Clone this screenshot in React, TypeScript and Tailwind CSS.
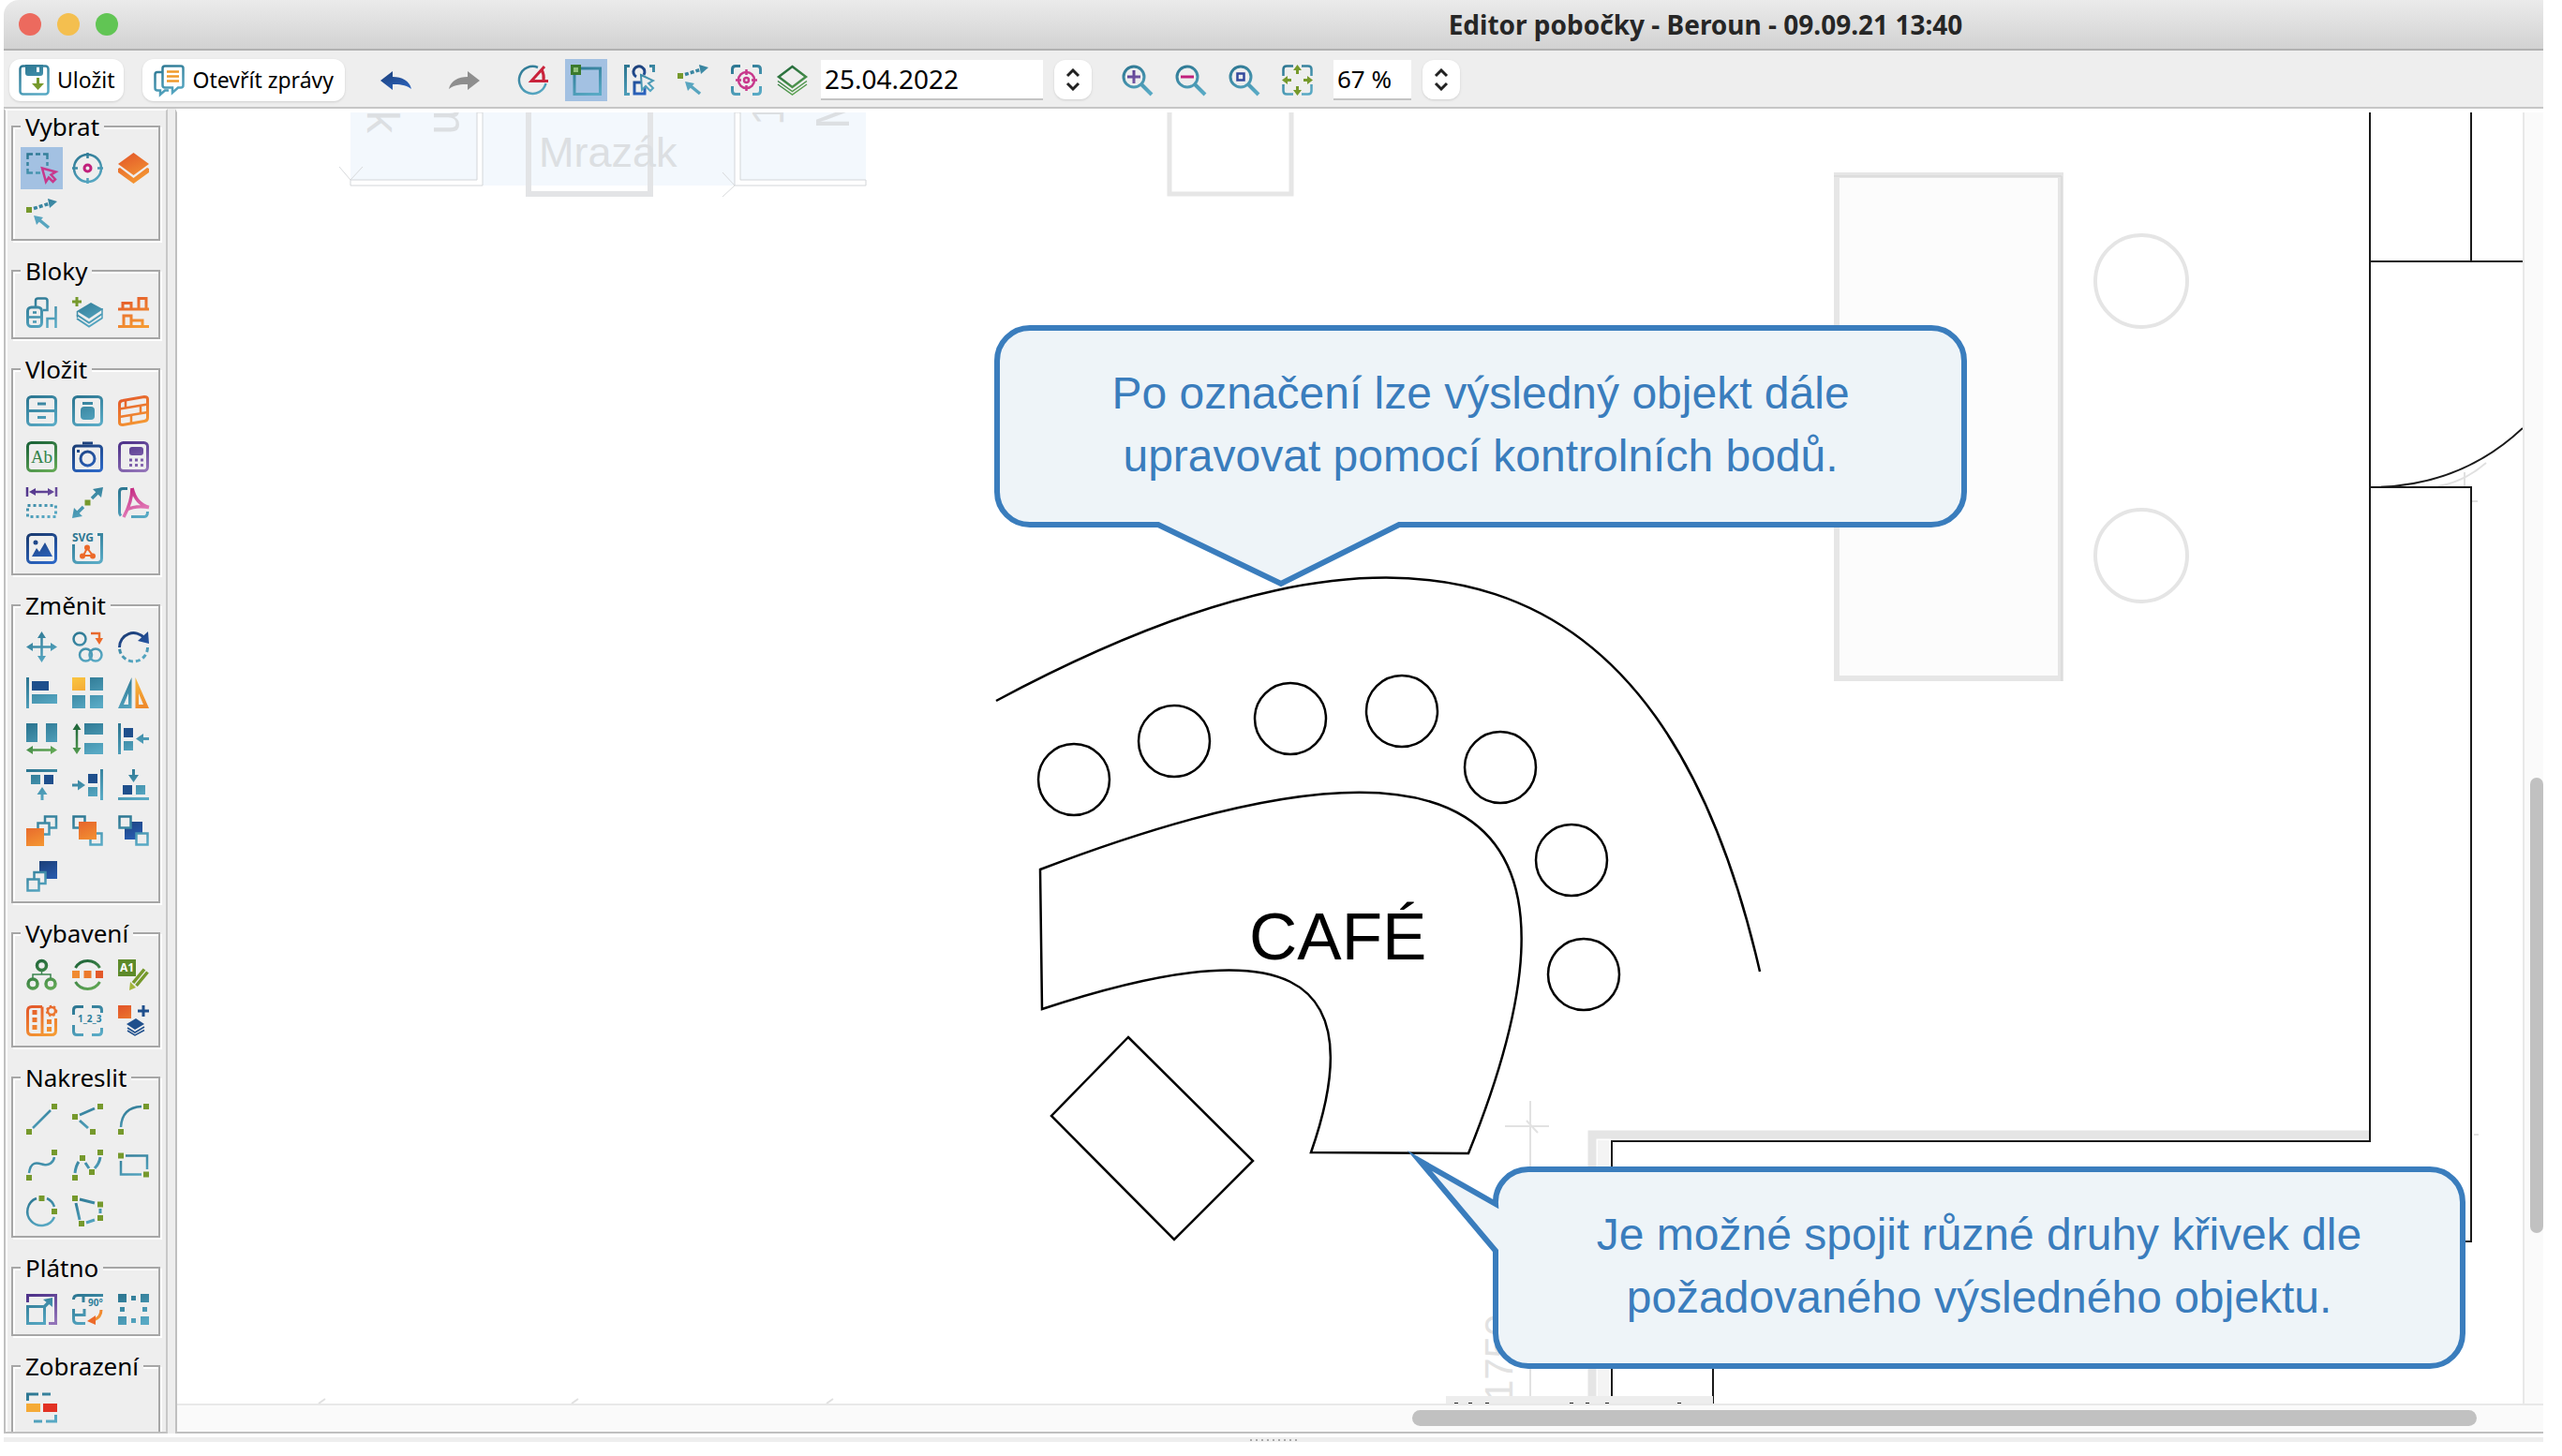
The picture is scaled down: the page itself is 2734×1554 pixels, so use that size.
import { useState } from 'react'
import type { ReactNode } from 'react'

// ─── Icon colours (gradients live in <IconDefs />) ────────────────────────────
const TEAL = 'url(#teal)'
const ORANGE = 'url(#orange)'
const AMBER = 'url(#amber)'
const GREEN = 'url(#green)'
const NAVY = 'url(#navy)'
const PURPLE = 'url(#purple)'
const PINK = 'url(#pink)'
const LIME = '#76992c'

const GRADIENTS = [
  ['teal', '#2d7792', '#58a9c4'],
  ['orange', '#e3592a', '#f59a33'],
  ['amber', '#f9c23f', '#ee8a2c'],
  ['green', '#1d6439', '#61a754'],
  ['navy', '#1b3c72', '#2c66c4'],
  ['purple', '#4f338a', '#9273b8'],
  ['pink', '#c1207c', '#e78cc2'],
]

function IconDefs() {
  return (
    <svg className="absolute size-0" aria-hidden="true">
      <defs>
        {GRADIENTS.map(([id, from, to]) => (
          <linearGradient key={id} id={id} gradientUnits="userSpaceOnUse" x1="8" y1="0" x2="22" y2="33">
            <stop offset="0" stopColor={from} />
            <stop offset="1" stopColor={to} />
          </linearGradient>
        ))}
      </defs>
    </svg>
  )
}

// Green control point
function Dot({ x, y }: { x: number; y: number }) {
  return <rect x={x - 3} y={y - 3} width="6" height="6" fill={LIME} stroke="none" />
}

function Box({ x, y, w, h, c = TEAL, r = 0 }: { x: number; y: number; w: number; h: number; c?: string; r?: number }) {
  return <rect x={x} y={y} width={w} height={h} rx={r} fill={c} stroke="none" />
}

function Shape({ d, c = TEAL }: { d: string; c?: string }) {
  return <path d={d} fill={c} stroke="none" fillRule="evenodd" />
}

function Frame({ c = TEAL }: { c?: string }) {
  return <rect x="1.5" y="1.5" width="30" height="30" rx="4" stroke={c} strokeWidth="3" />
}

function Square({ x, y }: { x: number; y: number }) {
  return <rect x={x} y={y} width="12" height="12" fill="#eeeeee" />
}

// All icons are drawn on a 33 × 33 grid
const ICONS: Record<string, ReactNode> = {
  save: (
    <>
      <rect x="1.5" y="1.5" width="30" height="30" rx="3" fill="white" />
      <Shape d="M7 0H26V9Q26 12 23 12H10Q7 12 7 9ZM19 2V8H22V2Z" />
      <Shape d="M19 14H22V20H27L20.500 27L14 20H19Z" c={LIME} />
    </>
  ),
  reports: (
    <>
      <path d="M12 1.500H29Q31.500 1.500 31.500 4V22Q31.500 24.500 29 24.500H26L20 30V24.500H12Q9.500 24.500 9.500 22V4Q9.500 1.500 12 1.500Z" />
      <path d="M9 8H4Q1.500 8 1.500 10.500V25Q1.500 27.500 4 27.500H7V32L12 27.500H16" />
      <path d="M14 7.500H27M14 12.500H27M14 17.500H27" stroke="#f09a2c" />
    </>
  ),
  undo: <Shape c={NAVY} d="M0 17L13 7V13C23 13 31 17 33 26C26 21 20 21 13 21V27Z" />,
  redo: <Shape c="#8e8e8e" d="M33 17L20 7V13C10 13 2 17 0 26C7 21 13 21 20 21V27Z" />,
  angle: (
    <>
      <path d="M22 3A14.500 14.500 0 1 0 30.500 20" />
      <path d="M29 2L15 17.500H33M26 5Q29 11 28 17" stroke="#c9233b" strokeWidth="3" />
    </>
  ),
  area: (
    <>
      <rect x="4" y="4" width="27.500" height="27.500" strokeWidth="3" />
      <rect x="1.500" y="1.500" width="8" height="8" stroke="#3c7a2c" strokeWidth="3" fill="#8fc07a" />
    </>
  ),
  pick: (
    <>
      <path d="M6 1.500H1.500V31.500H6M27 1.500H31.500V8" strokeWidth="3" />
      <rect x="11" y="19" width="11" height="12" stroke={NAVY} strokeWidth="3" />
      <path d="M13 13A6 6 0 1 1 21 11" stroke={NAVY} strokeWidth="3" />
      <path d="M18 11L31 17L26 20L31 25L28 28L23 23L19 27Z" fill="#eeeeee" strokeWidth="2" />
    </>
  ),
  vector: (
    <>
      <Dot x={3} y={12} />
      <path d="M8 10.500L24 5.500" strokeWidth="3.500" strokeDasharray="4 2" />
      <Shape d="M33 3L23 0L25 10Z" />
      <path d="M24 31L13 22" strokeWidth="3.500" stroke="#58a5bf" />
      <Shape d="M8 18L18 20L11 28Z" c="#58a5bf" />
    </>
  ),
  focus: (
    <>
      <path d="M1.500 10V5Q1.500 1.500 5 1.500H10M23 1.500H28Q31.500 1.500 31.500 5V10M31.500 23V28Q31.500 31.500 28 31.500H23M10 31.500H5Q1.500 31.500 1.500 28V23" strokeWidth="3" />
      <g stroke="#c8388c">
        <circle cx="16.500" cy="16.500" r="8.500" />
        <circle cx="16.500" cy="16.500" r="2.500" />
        <path d="M16.500 5V11M16.500 22V28M5 16.500H11M22 16.500H28" />
      </g>
    </>
  ),
  floors: (
    <g stroke={GREEN}>
      <path d="M16.500 2L31 13L16.500 24L2 13Z" />
      <path d="M1 17.500L16.500 28.500L32 17.500M1 21L16.500 32L32 21" strokeWidth="1.500" />
    </g>
  ),
  zoomIn: (
    <>
      <circle cx="13" cy="13" r="11" strokeWidth="3" />
      <path d="M21 21L32 32" strokeWidth="4" />
      <path d="M13 6V20M6 13H20" stroke={PURPLE} strokeWidth="3" />
    </>
  ),
  zoomOut: (
    <>
      <circle cx="13" cy="13" r="11" strokeWidth="3" />
      <path d="M21 21L32 32" strokeWidth="4" />
      <path d="M6 13H20" stroke="#c1207c" strokeWidth="3" />
    </>
  ),
  zoomOne: (
    <>
      <circle cx="13" cy="13" r="11" strokeWidth="3" />
      <path d="M21 21L32 32" strokeWidth="4" />
      <rect x="9.500" y="9.500" width="7" height="7" stroke="#33499c" />
    </>
  ),
  fit: (
    <>
      <path d="M12 1.500H5Q1.500 1.500 1.500 5V12M21 1.500H28Q31.500 1.500 31.500 5V12M1.500 21V28Q1.500 31.500 5 31.500H12M21 31.500H28Q31.500 31.500 31.500 28V21" />
      <Shape c={LIME} d="M16.500 0L21 6H18V10H15V6H12ZM16.500 33L21 27H18V23H15V27H12ZM0 16.500L6 12V15H10V18H6V21ZM33 16.500L27 12V15H23V18H27V21Z" />
    </>
  ),
  select: (
    <>
      <path d="M1.500 7V1.500H7M10 1.500H15M18 1.500H22.500V7M22.500 10V14M1.500 10V14M1.500 17V21.500H7M10 21.500H15" />
      <path d="M17 16.500L31.500 20.500L26.500 23.500L31 28.500L28.500 31L24 26.500L21 31Z" stroke="#c8388c" />
    </>
  ),
  target: (
    <>
      <circle cx="16.500" cy="16.500" r="14.500" />
      <path d="M16.500 0V6M16.500 27V33M0 16.500H6M27 16.500H33" />
      <circle cx="16.500" cy="16.500" r="3.500" stroke="#c1207c" strokeWidth="3" />
    </>
  ),
  layers: (
    <>
      <Shape c={ORANGE} d="M16.500 0L33 12L16.500 24L0 12Z" />
      <Shape c={ORANGE} d="M0 17L2 16L16.500 27L31 16L33 17V21L16.500 33L0 21Z" />
    </>
  ),
  furniture: (
    <>
      <path d="M10 10V4Q10 1.500 12.500 1.500H20Q22.500 1.500 22.500 4V14H18" />
      <rect x="1.500" y="11" width="15" height="20.500" rx="4" strokeWidth="3" />
      <path d="M1.500 21.500H16.500M7 16.500H11M7 26.500H11" />
      <path d="M31.500 10V33M22.500 33V23H31" />
    </>
  ),
  addBlock: (
    <>
      <path d="M5 0V10M0 5H10" stroke={LIME} strokeWidth="3" />
      <Shape d="M20 6L33 13L18 23L5 15Z" />
      <path d="M5 19L18 27.500L32 18M5 23L18 31.500L32 22.500" strokeWidth="2" />
      <path d="M32 12V23M5.500 15V22" strokeWidth="1.500" />
    </>
  ),
  shelves: (
    <g stroke={ORANGE} strokeWidth="3">
      <path d="M0 13H33M0 31.500H33" />
      <path d="M5 13V6.500H14V13M22 13V1.500H30V13M6 31.500V20H14V31.500M14 25H26V31.500" />
    </g>
  ),
  cabinet: (
    <>
      <Frame />
      <path d="M1.500 16.500H31.500M12 9H21M12 23.500H21" strokeWidth="3" />
    </>
  ),
  appliance: (
    <>
      <Frame />
      <path d="M11 8.500H22" strokeWidth="3" />
      <Box x={9} y={12} w={15} h={14} r={4} />
    </>
  ),
  wall: (
    <g stroke={ORANGE}>
      <path d="M1.500 9Q1.500 6 5 5.500L28 1.500Q31.500 1.500 31.500 4V24Q31.500 27 28 27.500L5 31.500Q1.500 31.500 1.500 29Z" strokeWidth="3" />
      <path d="M1.500 14.500L31.500 9.500M1.500 23L31.500 18M8 5V13M24 11V19M14 21V29" />
    </g>
  ),
  label: (
    <>
      <Frame c={GREEN} />
      <text x="16.500" y="23" textAnchor="middle" fontSize="19" fontFamily="Liberation Serif, serif" fill="#34834a" stroke="none">Ab</text>
    </>
  ),
  camera: (
    <g stroke={NAVY} strokeWidth="3">
      <rect x="1.500" y="5" width="30" height="26.500" rx="3" />
      <path d="M11 2H22" />
      <circle cx="16.500" cy="18.500" r="7.500" />
      <Box x={5} y={9} w={3} h={3} c={NAVY} />
    </g>
  ),
  register: (
    <>
      <Frame c={PURPLE} />
      <Box x={12} y={6} w={15} h={9} r={3} c={PURPLE} />
      <path d="M12 20H27M12 25.500H27" stroke={PURPLE} strokeWidth="3" strokeDasharray="3" />
    </>
  ),
  dimension: (
    <>
      <path d="M1 0V10M32 0V10M6 5H27" stroke={PURPLE} />
      <Shape c={PURPLE} d="M3 5L10 1V9ZM30 5L23 1V9Z" />
      <rect x="1.500" y="19.500" width="30" height="12" strokeWidth="3" strokeDasharray="3" />
    </>
  ),
  connector: (
    <>
      <path d="M21 12L28 5M12 21L5 28" strokeWidth="3.500" />
      <Shape d="M33 0L31 11L22 2ZM0 33L2 22L11 31Z" />
      <Dot x={16.500} y={16.500} />
    </>
  ),
  pdf: (
    <>
      <path d="M10 1.500H5Q1.500 1.500 1.500 5V27Q1.500 29 3 30.500M14 31.500H28Q31.500 31.500 31.500 26" strokeWidth="3" />
      <path d="M15 1Q15 15 6 32M15 1Q19 18 33 21.500M9 24Q19 19 33 21.500" stroke={PINK} strokeWidth="3.500" />
    </>
  ),
  image: (
    <>
      <Frame c={NAVY} />
      <circle cx="10" cy="10" r="2.500" fill={NAVY} stroke="none" />
      <Shape c={NAVY} d="M6 25L11 16L14 20L20 10L28 25Z" />
    </>
  ),
  svg: (
    <>
      <text x="0" y="9" fontSize="12" fontWeight="bold" fontFamily="Noto Sans, sans-serif" fill="#2d7792" stroke="none">SVG</text>
      <path d="M27 1.500H31.500V27Q31.500 31.500 27 31.500H6Q1.500 31.500 1.500 27V12" strokeWidth="3" />
      <path d="M16 16L12 24H22Z" stroke="#ec6a2a" strokeWidth="2" />
      <g fill="#ec6a2a" stroke="none">
        <circle cx="16" cy="15.500" r="3" />
        <circle cx="11" cy="24.500" r="3" />
        <circle cx="22" cy="24.500" r="3" />
      </g>
    </>
  ),
  move: (
    <>
      <path d="M16.500 5V28M5 16.500H28" />
      <Shape d="M16.500 0L21 7H12ZM16.500 33L21 26H12ZM0 16.500L7 12V21ZM33 16.500L26 12V21Z" />
    </>
  ),
  duplicate: (
    <>
      <circle cx="8" cy="8" r="6.500" />
      <circle cx="14.500" cy="25" r="6.500" />
      <circle cx="25" cy="25" r="6.500" />
      <path d="M20 2H29V8" stroke={ORANGE} />
      <Shape c="#ec6a2a" d="M24.500 7H33L29 14Z" />
    </>
  ),
  rotate: (
    <>
      <path d="M1.500 17A15 15 0 0 1 28 7" stroke={NAVY} strokeWidth="3" />
      <Shape c={NAVY} d="M32 0L33 13L21 10Z" />
      <path d="M31.500 17A15 15 0 0 1 1.500 17" strokeWidth="3" strokeDasharray="5 3" />
    </>
  ),
  alignLeft: (
    <>
      <path d="M1.500 0V33" strokeWidth="3" />
      <Box x={6} y={4} w={18} h={10} c="#1f4f8c" />
      <Box x={6} y={18} w={27} h={10} />
    </>
  ),
  tiles: (
    <>
      <Box x={0} y={0} w={14} h={14} c={AMBER} />
      <Box x={19} y={0} w={14} h={14} />
      <Box x={0} y={19} w={14} h={14} />
      <Box x={19} y={19} w={14} h={14} />
    </>
  ),
  mirror: (
    <>
      <Shape d="M0 33L14.500 0V33ZM6 29H11V17Z" />
      <Shape c={AMBER} d="M33 33L18.500 0V33ZM27 29H22V17Z" />
    </>
  ),
  spreadX: (
    <>
      <Box x={0} y={0} w={12} h={20} />
      <Box x={21} y={0} w={12} h={20} />
      <path d="M5 28.500H28" stroke={GREEN} />
      <Shape c={GREEN} d="M0 28.500L7 24V33ZM33 28.500L26 24V33Z" />
    </>
  ),
  spreadY: (
    <>
      <path d="M5 5V28" stroke={GREEN} />
      <Shape c={GREEN} d="M5 0L9.500 7H0.500ZM5 33L9.500 26H0.500Z" />
      <Box x={13} y={0} w={20} h={12} />
      <Box x={13} y={21} w={20} h={12} />
    </>
  ),
  pushLeft: (
    <>
      <path d="M1.500 0V33M33 16.500H25" strokeWidth="3" />
      <Box x={6} y={5} w={10} h={10} c="#1f4f8c" />
      <Box x={6} y={19} w={10} h={10} />
      <Shape d="M19 16.500L27 11V22Z" />
    </>
  ),
  pushTop: (
    <>
      <path d="M0 1.500H33M17 33V25" strokeWidth="3" />
      <Box x={5} y={6} w={10} h={10} />
      <Box x={19} y={6} w={10} h={10} c="#1f4f8c" />
      <Shape d="M17 19L22.500 27H11.500Z" />
    </>
  ),
  pushRight: (
    <>
      <path d="M31.500 0V33M0 17H8" strokeWidth="3" />
      <Box x={17} y={5} w={10} h={10} c="#1f4f8c" />
      <Box x={17} y={19} w={10} h={10} />
      <Shape d="M14 17L6 11.500V22.500Z" />
    </>
  ),
  pushBottom: (
    <>
      <path d="M0 31.500H33M16.500 0V8" strokeWidth="3" />
      <Box x={5} y={17} w={10} h={10} c="#1f4f8c" />
      <Box x={19} y={17} w={10} h={10} />
      <Shape d="M16.500 14L11 6H22Z" />
    </>
  ),
  toFront: (
    <>
      <Square x={20} y={1.500} />
      <Square x={12.500} y={8.500} />
      <Box x={0} y={14} w={19} h={19} c={ORANGE} />
    </>
  ),
  forward: (
    <>
      <Square x={1.500} y={1.500} />
      <Square x={19.500} y={19.500} />
      <Box x={7} y={7} w={19} h={19} c={ORANGE} />
    </>
  ),
  backward: (
    <>
      <Box x={7} y={7} w={19} h={19} c={NAVY} />
      <Square x={1.500} y={1.500} />
      <Square x={19.500} y={19.500} />
    </>
  ),
  toBack: (
    <>
      <Box x={14} y={0} w={19} h={19} c={NAVY} />
      <Square x={8.500} y={12} />
      <Square x={1.500} y={19.500} />
    </>
  ),
  tree: (
    <>
      <g stroke={GREEN} strokeWidth="3.500">
        <circle cx="16.500" cy="6.500" r="5" />
        <circle cx="7" cy="26" r="5" />
        <circle cx="26" cy="26" r="5" />
      </g>
      <path d="M16.500 11V16M7 20V16H26V20" stroke="#3c8550" strokeWidth="1.500" />
    </>
  ),
  orbit: (
    <>
      <path d="M3.500 9A15 15 0 0 1 29.500 9M3.500 24A15 15 0 0 0 29.500 24" stroke={GREEN} strokeWidth="3" />
      <Box x={0} y={12} w={8} h={8} c="#f08a30" />
      <Box x={12.500} y={12} w={8} h={8} c="#ec7a2c" />
      <Box x={25} y={12} w={8} h={8} c="#e3592a" />
    </>
  ),
  rename: (
    <>
      <Box x={0} y={0} w={19} h={18} c="#5d8a2a" />
      <text x="9.500" y="13" textAnchor="middle" fontSize="12" fontWeight="bold" fontFamily="Noto Sans, sans-serif" fill="white" stroke="none">A1</text>
      <path d="M16 25L28 10.500M19.500 28L31.500 13.500" stroke={LIME} strokeWidth="3.500" />
      <Shape c="#a3b53a" d="M13 24L19 30L12 33Z" />
    </>
  ),
  rack: (
    <g stroke={ORANGE}>
      <path d="M17 1.500H6Q1.500 1.500 1.500 6V27Q1.500 31.500 6 31.500H27Q31.500 31.500 31.500 27V14M17 1.500V31.500" strokeWidth="3" />
      <path d="M9 5V29M24.500 15V29" strokeWidth="5" strokeDasharray="5 3" />
      <circle cx="27" cy="6" r="4" />
      <circle cx="27" cy="6" r="5.500" strokeWidth="1.500" strokeDasharray="2.300" />
    </g>
  ),
  numbering: (
    <>
      <path d="M1.500 10V5Q1.500 1.500 5 1.500H12M21 1.500H28Q31.500 1.500 31.500 5V8M31.500 24V28Q31.500 31.500 28 31.500H21M12 31.500H5Q1.500 31.500 1.500 28V21" strokeWidth="3" />
      <text x="6" y="18" fontSize="10" fontWeight="bold" fontFamily="Noto Sans, sans-serif" fill="#2f7f9b" stroke="none">1_2_3</text>
    </>
  ),
  addEquipment: (
    <>
      <Box x={0} y={0} w={14} h={14} c={ORANGE} />
      <path d="M27 0V12M21 6H33" stroke="#1f4f8c" strokeWidth="3" />
      <Shape c="#1f4f8c" d="M19 14L28 20L18 26L9 20Z" />
      <path d="M10 24L18 29L28 23M10 27L18 32L28 26.500" stroke="#1f4f8c" strokeWidth="1.500" />
    </>
  ),
  line: (
    <>
      <path d="M7 26L26 7" />
      <Dot x={30} y={3} />
      <Dot x={3} y={30} />
    </>
  ),
  polyline: (
    <>
      <path d="M8 12L24 5M8 18L17 26" strokeWidth="3" />
      <Dot x={30} y={3} />
      <Dot x={3} y={14} />
      <Dot x={22} y={30} />
    </>
  ),
  arc: (
    <>
      <path d="M3 25Q4 4 25 3" />
      <Dot x={30} y={3} />
      <Dot x={3} y={30} />
    </>
  ),
  curve: (
    <>
      <path d="M3 25C5 10 14 15 19 16S29 14 30 8" />
      <Dot x={30} y={3} />
      <Dot x={3} y={30} />
    </>
  ),
  spline: (
    <>
      <path d="M3 25Q4 17 7 13M14 14L18 20M24 20Q29 15 30 8" strokeWidth="3" />
      <Dot x={30} y={3} />
      <Dot x={11} y={9} />
      <Dot x={21} y={24} />
      <Dot x={3} y={30} />
    </>
  ),
  rectangle: (
    <>
      <path d="M8 6.500H31V21M25 26.500H3V12" />
      <Dot x={3} y={6.500} />
      <Dot x={30} y={26.500} />
    </>
  ),
  circle: (
    <>
      <path d="M11 3A15 15 0 1 0 30 23M22 3A15 15 0 0 1 30 12" />
      <Dot x={16.500} y={3} />
      <Dot x={30} y={17} />
    </>
  ),
  polygon: (
    <>
      <path d="M8 4L24 8M30 14V19M24 26L15 29M4 8L8 26" strokeWidth="3" />
      <Dot x={3} y={3} />
      <Dot x={30} y={9.500} />
      <Dot x={30} y={24} />
      <Dot x={10} y={30} />
    </>
  ),
  resize: (
    <>
      <path d="M1.500 9V1.500H31.500V31.500H24" stroke={PURPLE} strokeWidth="3" />
      <rect x="1.500" y="13.500" width="18" height="18" strokeWidth="3" />
      <path d="M18 15L24 9" strokeWidth="3.500" />
      <Shape d="M28 4V14L18 6Z" />
    </>
  ),
  rotateCanvas: (
    <>
      <path d="M33 1.500H6Q1.500 1.500 1.500 6M12 1.500V9M1.500 16V27Q1.500 31.500 6 31.500H14M1.500 22.500H13V16" strokeWidth="3" />
      <text x="17" y="13" fontSize="10" fontWeight="bold" fontFamily="Noto Sans, sans-serif" fill="#2f7f9b" stroke="none">90°</text>
      <path d="M31 17Q31 25 23 28" stroke={ORANGE} strokeWidth="3" />
      <Shape c="#ec6a2a" d="M16 29L25 23V33Z" />
    </>
  ),
  handles: (
    <>
      <Box x={0} y={0} w={9} h={9} />
      <Box x={24} y={0} w={9} h={9} />
      <Box x={0} y={24} w={9} h={9} />
      <Box x={24} y={24} w={9} h={9} />
      <Box x={14} y={2} w={5} h={5} />
      <Box x={14} y={26} w={5} h={5} />
      <Box x={2} y={14} w={5} h={5} />
      <Box x={26} y={14} w={5} h={5} />
    </>
  ),
  display: (
    <>
      <path d="M1.500 9V2H13M17 2H26M31.500 24V31H21M17 31H8" strokeWidth="3" />
      <Box x={0} y={12} w={15} h={9} c="#f5aa36" />
      <Box x={18} y={12} w={15} h={9} c="#e23224" />
    </>
  ),
}

const GROUPS = [
  { title: 'Vybrat', tools: ['select', 'target', 'layers', 'vector'] },
  { title: 'Bloky', tools: ['furniture', 'addBlock', 'shelves'] },
  {
    title: 'Vložit',
    tools: ['cabinet', 'appliance', 'wall', 'label', 'camera', 'register', 'dimension', 'connector', 'pdf', 'image', 'svg'],
  },
  {
    title: 'Změnit',
    tools: [
      'move', 'duplicate', 'rotate', 'alignLeft', 'tiles', 'mirror', 'spreadX', 'spreadY', 'pushLeft',
      'pushTop', 'pushRight', 'pushBottom', 'toFront', 'forward', 'backward', 'toBack',
    ],
  },
  { title: 'Vybavení', tools: ['tree', 'orbit', 'rename', 'rack', 'numbering', 'addEquipment'] },
  { title: 'Nakreslit', tools: ['line', 'polyline', 'arc', 'curve', 'spline', 'rectangle', 'circle', 'polygon'] },
  { title: 'Plátno', tools: ['resize', 'rotateCanvas', 'handles'] },
  { title: 'Zobrazení', tools: ['display'] },
]

function Icon({ name }: { name: string }) {
  return (
    <svg className="size-[33px] shrink-0 overflow-visible" viewBox="0 0 33 33" fill="none" stroke={TEAL} strokeWidth="2.500" aria-hidden="true">
      {ICONS[name]}
    </svg>
  )
}

function ToolButton({ name, active, onClick }: { name: string; active?: boolean; onClick?: () => void }) {
  return (
    <button
      aria-label={name}
      onClick={onClick}
      className={`flex size-[45px] shrink-0 items-center justify-center ${active ? 'bg-[#a3c1e2]' : ''}`}
    >
      <Icon name={name} />
    </button>
  )
}

function Spinner({ label }: { label: string }) {
  return (
    <button aria-label={label} className="flex h-[42px] w-10 shrink-0 items-center justify-center rounded-xl bg-white shadow">
      <svg className="h-6 w-4" viewBox="0 0 16 24" fill="none" stroke="#222222" strokeWidth="3" aria-hidden="true">
        <path d="M2 8L8 2L14 8M2 16L8 22L14 16" />
      </svg>
    </button>
  )
}

// ─── Title bar + toolbar ──────────────────────────────────────────────────────
function TitleBar() {
  return (
    <header className="relative flex h-[54px] shrink-0 items-center rounded-tl-2xl border-b-2 border-[#b1b1b1] bg-gradient-to-b from-[#ebebeb] to-[#d2d2d2] pl-4">
      <div className="flex gap-[17px]">
        <span className="size-6 rounded-full bg-[#ec6a5e]" />
        <span className="size-6 rounded-full bg-[#f4bf4f]" />
        <span className="size-6 rounded-full bg-[#61c554]" />
      </div>
      <h1 className="flex-1 pl-[800px] text-center text-[28px] leading-8 font-bold text-[#262626]">
        Editor pobočky - Beroun - 09.09.21 13:40
      </h1>
    </header>
  )
}

function Toolbar() {
  return (
    <div className="flex h-[62px] shrink-0 items-center border-b-2 border-[#c6c6c6] bg-[#eeeeee] pl-1.5 pt-0.5">
      <button className="flex h-[45px] items-center gap-2 rounded-xl bg-white px-2.5 text-[23px] shadow">
        <Icon name="save" /> Uložit
      </button>
      <button className="ml-5 flex h-[45px] items-center gap-2 rounded-xl bg-white px-3 text-[23px] shadow">
        <Icon name="reports" /> Otevřít zprávy
      </button>
      <div className="ml-8 flex gap-7">
        <ToolButton name="undo" />
        <ToolButton name="redo" />
      </div>
      <div className="ml-7 flex gap-3">
        <ToolButton name="angle" />
        <ToolButton name="area" active />
        <ToolButton name="pick" />
        <ToolButton name="vector" />
        <ToolButton name="focus" />
      </div>
      <div className="ml-1 flex items-center">
        <ToolButton name="floors" />
        <input
          aria-label="Datum"
          defaultValue="25.04.2022"
          className="ml-2 mr-3 h-[43px] w-[237px] border-b-2 border-[#c4c4c4] bg-white pl-1 text-[28px]"
        />
        <Spinner label="Změnit datum" />
      </div>
      <div className="ml-[26px] flex gap-3">
        <ToolButton name="zoomIn" />
        <ToolButton name="zoomOut" />
        <ToolButton name="zoomOne" />
        <ToolButton name="fit" />
      </div>
      <input
        aria-label="Přiblížení"
        defaultValue="67 %"
        className="ml-4 mr-3 h-[43px] w-[83px] border-b-2 border-[#c4c4c4] bg-white pl-1 text-[26px]"
      />
      <Spinner label="Změnit přiblížení" />
    </div>
  )
}

// ─── Left palette ─────────────────────────────────────────────────────────────
function Sidebar() {
  const [tool, setTool] = useState('select')

  return (
    <aside className="w-[175px] shrink-0 overflow-hidden border-2 border-[#c0c0c0] border-t-white border-r-[#c8c8c8] px-1.5 pt-px shadow-[inset_2px_0_0_white]">
      <div className="flex flex-col gap-4">
        {GROUPS.map((group) => (
          <fieldset
            key={group.title}
            className="border-2 border-[#a6a6a6] pb-1 pl-2 shadow-[2px_2px_0_white,inset_2px_2px_0_white]"
          >
            <legend className="bg-[#eeeeee] px-[5px] text-[26px] leading-8">{group.title}</legend>
            <div className="flex flex-wrap gap-1 pt-1.5">
              {group.tools.map((name) => (
                <ToolButton key={name} name={name} active={name === tool} onClick={() => setTool(name)} />
              ))}
            </div>
          </fieldset>
        ))}
      </div>
    </aside>
  )
}

// ─── Floor plan ───────────────────────────────────────────────────────────────
const STOOLS = [
  [1146, 832], [1253, 791], [1377, 767], [1496, 759], [1601, 819], [1677, 918], [1690, 1040],
]

const LABEL_MARKS = [1552, 1567, 1585, 1675, 1692, 1713, 1790]

function FloorPlan() {
  return (
    <svg
      className="absolute left-0 top-0"
      width="2503"
      height="1379"
      viewBox="189 120 2503 1379"
      fill="none"
      fontFamily="Liberation Sans, sans-serif"
      role="img"
      aria-label="Půdorys pobočky"
    >
      {/* Faded background layer */}
      <path d="M374 120H924V192H790V198H784H374Z" fill="#f3f8fd" />
      <path d="M509 120H515V198H374V192H509ZM784 120H790V192H924V198H784Z" fill="white" stroke="#d3d6d9" />
      <path d="M362 178L374 192L387 178M771 184L784 198L771 210" stroke="#d8dadc" />
      <path d="M564 120V207H694V120" stroke="#e3e4e6" strokeWidth="6" />
      <path d="M567 199H691V204H567Z" fill="white" />
      <path d="M1248 120V207H1378V120" stroke="#e6e6e6" strokeWidth="5" />
      <g fill="#dcdfe2">
        <text x="575" y="178" fontSize="45">Mrazák</text>
        <text transform="translate(392 142) rotate(90)" fontSize="48" textAnchor="end">Mrazák</text>
        <text transform="translate(463 144) rotate(90)" fontSize="50" textAnchor="end">1000 mm</text>
        <text transform="translate(836 134) rotate(-90)" fontSize="48">1200</text>
        <text transform="translate(906 138) rotate(-90)" fontSize="50">Mrazák</text>
      </g>
      <rect x="1960" y="187" width="239" height="537" fill="#fcfcfc" stroke="#e6e6e6" strokeWidth="6" />
      <path d="M1957 188H2200V727" stroke="#d3d3d3" />
      <circle cx="2285" cy="300" r="49" stroke="#e5e5e5" strokeWidth="4" />
      <circle cx="2285" cy="593" r="49" stroke="#e5e5e5" strokeWidth="4" />
      <path d="M2529 1211H1699V1499" stroke="#e5e5e5" strokeWidth="9" />
      <path d="M1711 1499V1217" stroke="#f4f4f4" strokeWidth="12" />
      <path d="M1633 1175V1499M1606 1202H1653M1629 1196L1641 1209M2640 1211H2645" stroke="#e2e2e2" strokeWidth="2" />
      <path d="M340 1498L347 1493M610 1498L617 1493M882 1498L889 1493M2602 519Q2630 514 2653 494M2630 504V520M2637 535H2644" stroke="#e0e0e0" strokeWidth="2" />
      <text transform="translate(1614 1496) rotate(-90)" fontSize="42" fill="#e2e2e2">1750</text>

      {/* Walls */}
      <g stroke="#1a1a1a" strokeWidth="2">
        <path d="M2529 120V1218H1720V1499M1828 1440V1499" />
        <path d="M2637 120V279M2529 279H2692" />
        <path d="M2529 520Q2625 520 2692 457M2529 520H2637V1325H2620" />
      </g>
      <path d="M1543 1490H1828V1499H1543Z" fill="#ededed" />
      {LABEL_MARKS.map((x) => (
        <path key={x} d={`M${x} 1498H${x + 4}`} stroke="#222222" strokeWidth="2" />
      ))}

      {/* Bar */}
      <g stroke="black" strokeWidth="2.500">
        <path d="M1063 748C1500 514 1774 582 1878 1037" />
        <path d="M1110 928C1555 758 1722 848 1567 1231L1399 1230C1468 1032 1366 993 1112 1077Z" />
        <path d="M1204 1107L1337 1239L1253 1323L1122 1191Z" />
        {STOOLS.map(([x, y]) => (
          <circle key={x} cx={x} cy={y} r="38" />
        ))}
      </g>
      <text x="1333" y="1024" fontSize="71" fill="black">CAFÉ</text>
    </svg>
  )
}

function Canvas() {
  return (
    <main className="relative flex-1 overflow-hidden bg-white font-['Liberation_Sans',sans-serif]">
      <FloorPlan />

      <div className="absolute left-[872px] top-[227px] flex h-[216px] w-[1038px] items-center justify-center">
        <svg className="absolute left-0 top-0" width="1038" height="284" fill="#eef4f8" stroke="#3a7dbd" strokeWidth="6" aria-hidden="true">
          <path d="M38 3H1000A35 35 0 0 1 1035 38V178A35 35 0 0 1 1000 213H432L306 276L175 213H38A35 35 0 0 1 3 178V38A35 35 0 0 1 38 3Z" />
        </svg>
        <p className="relative pb-1 text-center text-[48px] leading-[67px] text-[#3a7dbd]">
          Po označení lze výsledný objekt dále
          <br />
          upravovat pomocí kontrolních bodů.
        </p>
      </div>

      <div className="absolute left-[1404px] top-[1125px] flex h-[216px] w-[1038px] items-center justify-center">
        <svg className="absolute -left-[100px] -top-[20px] overflow-visible" width="1138" height="240" fill="#eef4f8" stroke="#3a7dbd" strokeWidth="6" aria-hidden="true">
          <path d="M138 23H1100A35 35 0 0 1 1135 58V198A35 35 0 0 1 1100 233H138A35 35 0 0 1 103 198V110L22 14L103 60A35 35 0 0 1 138 23Z" strokeMiterlimit="10" />
        </svg>
        <p className="relative pb-1 text-center text-[48px] leading-[67px] text-[#3a7dbd]">
          Je možné spojit různé druhy křivek dle
          <br />
          požadovaného výsledného objektu.
        </p>
      </div>
    </main>
  )
}

export default function App() {
  return (
    <div className="flex h-screen flex-col overflow-hidden bg-white pb-[15px] pl-1 pr-5 font-['Noto_Sans',sans-serif] text-black">
      <IconDefs />
      <TitleBar />
      <Toolbar />
      <div className="flex min-h-0 flex-1 bg-[#eeeeee]">
        <Sidebar />
        <div className="ml-2 flex min-w-0 flex-1 flex-col border-l-2 border-t-4 border-b-2 border-[#c0c0c0] border-t-white">
          <div className="flex min-h-0 flex-1">
            <Canvas />
            <div className="flex w-[22px] justify-end border-l-2 border-[#e8e8e8] bg-[#fafafa]">
              <div className="mt-[710px] h-[486px] w-[14px] rounded-full bg-[#c1c1c1]" />
            </div>
          </div>
          <div className="h-[30px] border-t-2 border-[#e8e8e8] bg-[#fafafa] pl-[1318px] pr-[71px] pt-[5px]">
            <div className="h-[17px] rounded-full bg-[#c1c1c1]" />
          </div>
        </div>
      </div>
      <div className="flex h-[9px] shrink-0 items-center justify-center gap-1 border-t-4 border-white bg-[#eeeeee]">
        {Array.from({ length: 9 }, (_, i) => (
          <span key={i} className="size-0.5 bg-[#a8a8a8]" />
        ))}
      </div>
    </div>
  )
}
